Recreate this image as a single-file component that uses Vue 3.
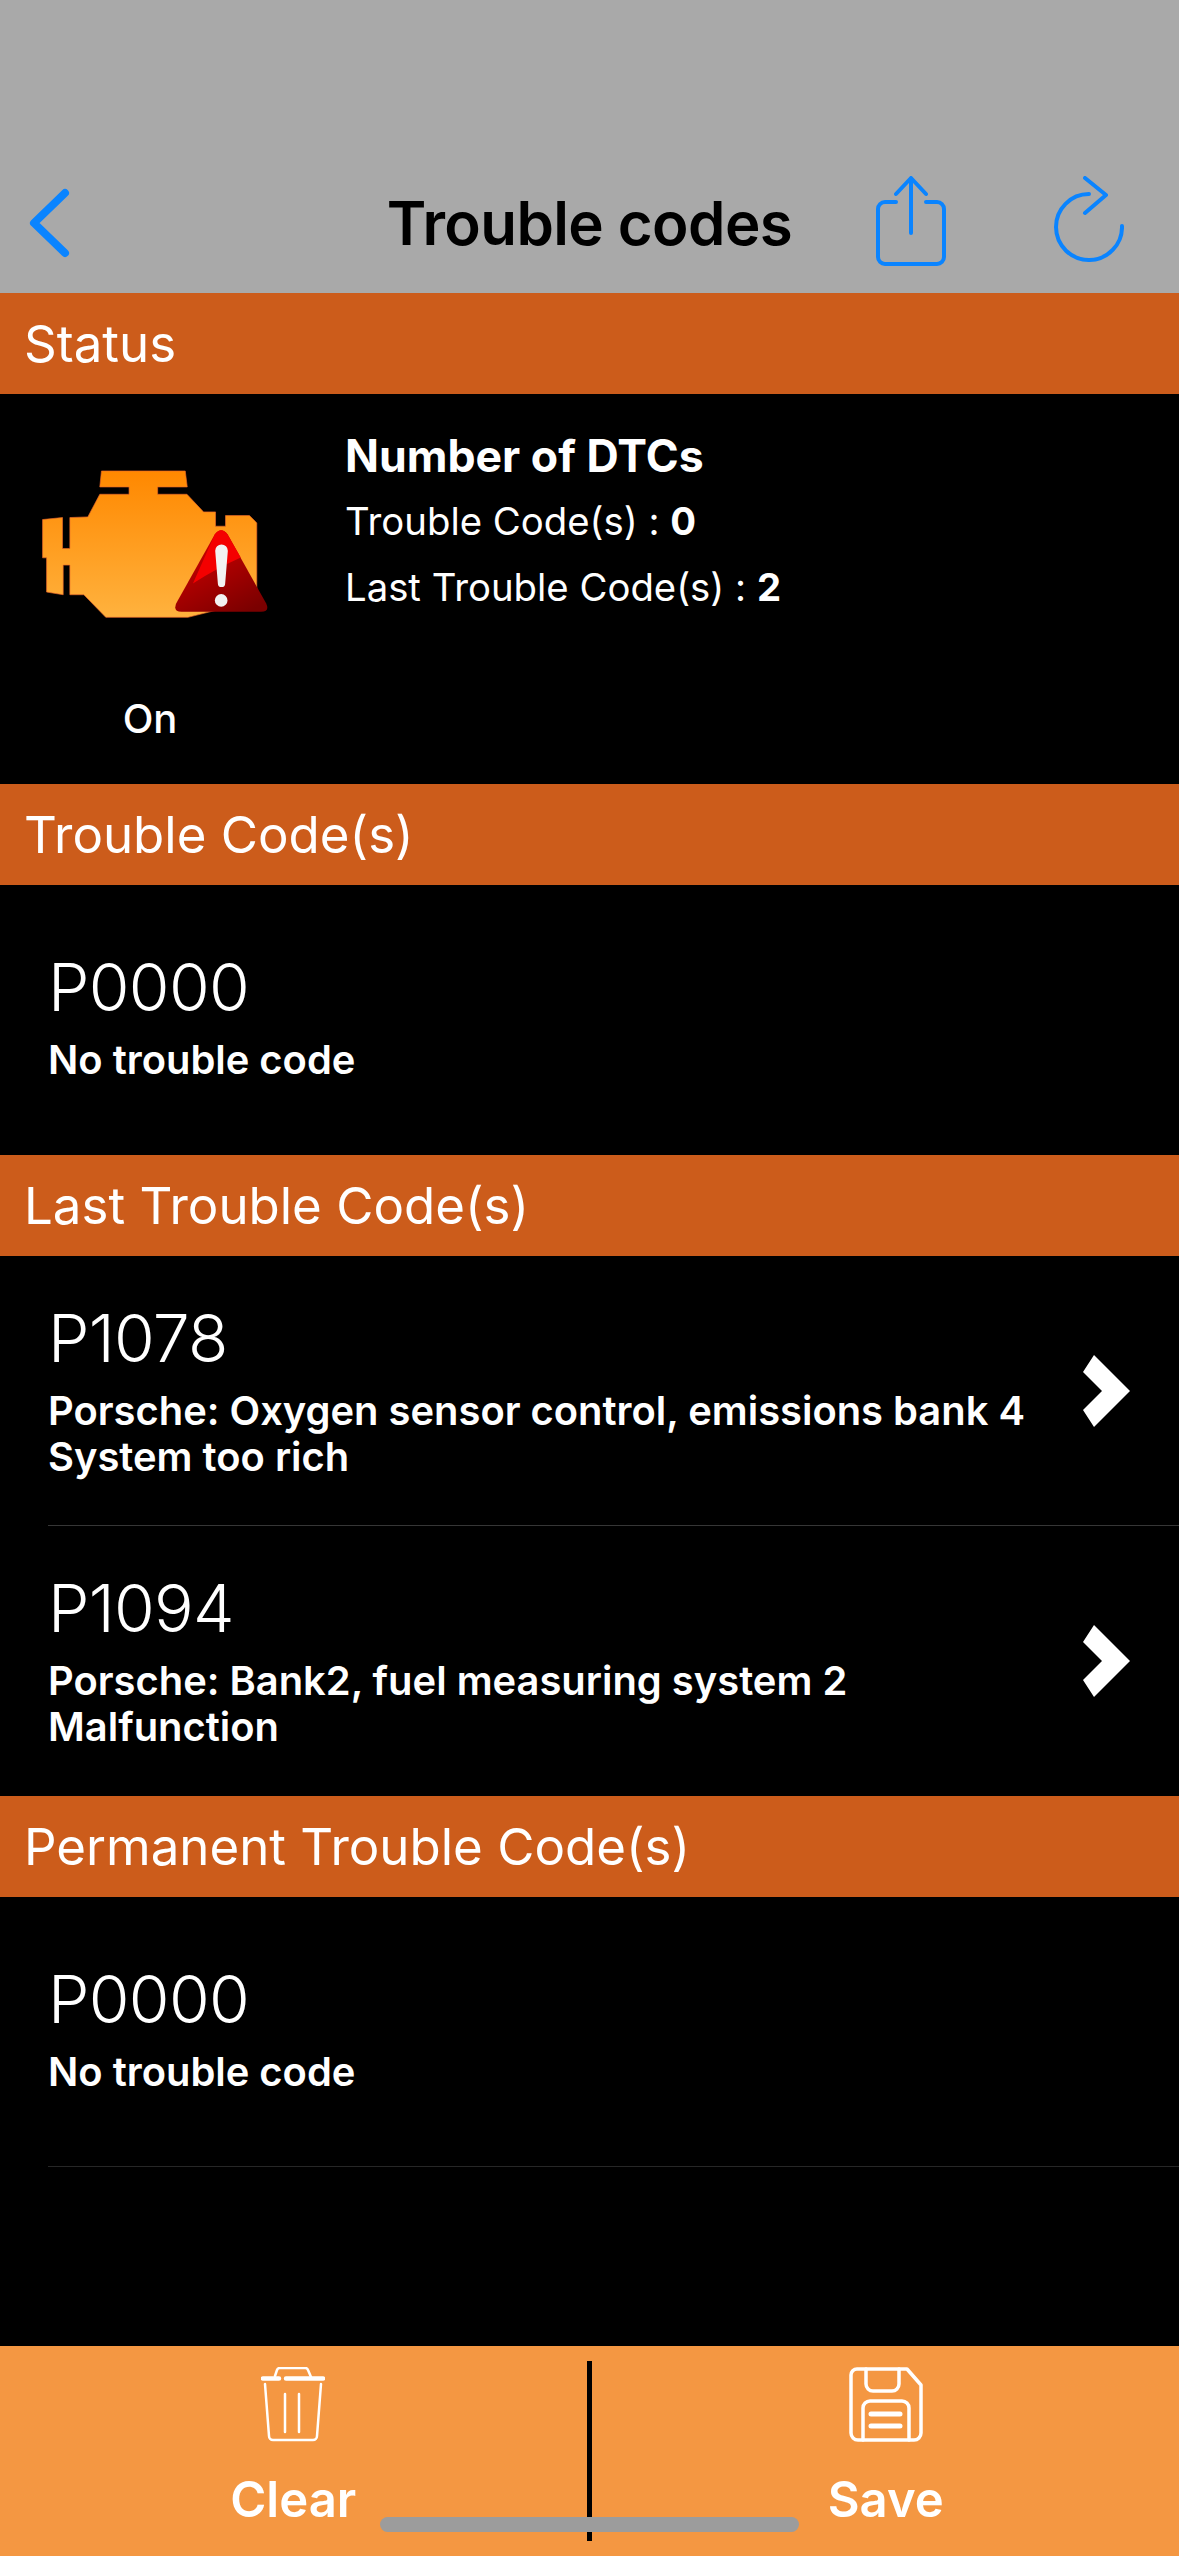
<script setup>
const lastCodes = [
  { code: 'P1078', lines: ['Porsche: Oxygen sensor control, emissions bank 4', 'System too rich'] },
  { code: 'P1094', lines: ['Porsche: Bank2, fuel measuring system 2', 'Malfunction'] }
]
</script>

<template>
  <div class="screen">
    <!-- Nav bar -->
    <header class="nav">
      <svg class="nav-back" viewBox="0 0 42 70" fill="none" stroke="#0A84FF" stroke-width="8" stroke-linecap="round" stroke-linejoin="round">
        <polyline points="37,5 6,35 37,65"></polyline>
      </svg>
      <h1 class="nav-title">Trouble codes</h1>
      <svg class="nav-share" viewBox="0 0 70 90" fill="none" stroke="#0A84FF" stroke-width="4" stroke-linecap="round" stroke-linejoin="round">
        <path d="M20 26H9a7 7 0 0 0-7 7v48a7 7 0 0 0 7 7h52a7 7 0 0 0 7-7V33a7 7 0 0 0-7-7H50"></path>
        <path d="M35 57V3"></path>
        <polyline points="20,18 35,2 50,18"></polyline>
      </svg>
      <svg class="nav-refresh" viewBox="0 0 70 86" fill="none" stroke="#0A84FF" stroke-width="4" stroke-linecap="round" stroke-linejoin="round">
        <path d="M68 50A33 33 0 1 1 35 18"></path>
        <polyline points="31,2 52,19 31,37"></polyline>
      </svg>
    </header>

    <div class="section-bar">Status</div>
    <section class="status">
      <div class="status-light">
        <svg class="engine" viewBox="40 80 720 460">
          <defs>
            <linearGradient id="engineFill" x1="0" y1="0" x2="0" y2="1">
              <stop offset="0" stop-color="#FF8800"></stop>
              <stop offset="1" stop-color="#FFB23E"></stop>
            </linearGradient>
            <linearGradient id="warnFill" x1="0.2" y1="0" x2="0.8" y2="1">
              <stop offset="0" stop-color="#D80000"></stop>
              <stop offset="1" stop-color="#7A0000"></stop>
            </linearGradient>
          </defs>
          <polygon
            fill="url(#engineFill)"
            stroke="#E8662A"
            stroke-width="2"
            points="245,92 497,92 503,140 414,140 414,162 502,162 552,215 588,215 588,258 618,258 618,226 690,226 712,248 712,480 505,532 258,532 192,464 150,464 150,375 130,375 130,464 80,456 80,353 68,353 68,238 128,232 128,325 150,325 150,232 204,230 240,162 328,162 328,140 240,140"
          ></polygon>
          <path fill="url(#warnFill)" d="M586 282Q605 258 624 282L740 490Q752 515 725 515H486Q459 515 470 490Z"></path>
          <path fill="#F40000" d="M586 282Q605 258 624 282L664 352Q590 385 520 430Z"></path>
          <path fill="#F2F2F2" d="M587 332a19 19 0 0 1 38 0L617 430a11 11 0 0 1-22 0Z"></path>
          <circle cx="605" cy="481" r="19" fill="#F2F2F2"></circle>
        </svg>
        <span class="status-on">On</span>
      </div>
      <div class="status-info">
        <div class="status-heading">Number of DTCs</div>
        <div class="status-line">Trouble Code(s) : <b>0</b></div>
        <div class="status-line">Last Trouble Code(s) : <b>2</b></div>
      </div>
    </section>

    <div class="section-bar">Trouble Code(s)</div>
    <div class="code-row">
      <div class="code-text single">
        <div class="code">P0000</div>
        <div class="desc">No trouble code</div>
      </div>
    </div>

    <div class="section-bar">Last Trouble Code(s)</div>
    <div v-for="(item, idx) in lastCodes" :key="item.code" class="code-row" :class="{ 'has-line': idx === 0 }">
      <div class="code-text">
        <div class="code">{{ item.code }}</div>
        <div v-for="line in item.lines" :key="line" class="desc">{{ line }}</div>
      </div>
      <svg class="row-chevron" viewBox="0 0 47 72">
        <polygon fill="#FFFFFF" points="11,0 47,36 11,72 0,55 19,36 0,17"></polygon>
      </svg>
    </div>

    <div class="section-bar">Permanent Trouble Code(s)</div>
    <div class="code-row has-line dim-line">
      <div class="code-text single">
        <div class="code">P0000</div>
        <div class="desc">No trouble code</div>
      </div>
    </div>

    <div class="spacer"></div>

    <!-- Bottom actions -->
    <footer class="actions">
      <div class="action">
        <svg class="action-icon trash" viewBox="0 0 64 75" fill="none" stroke="#FFFFFF" stroke-width="2.5" stroke-linecap="round" stroke-linejoin="round">
          <path d="M14 9l2-6a3 3 0 0 1 3-2h25a3 3 0 0 1 3 2l3 7"></path>
          <path d="M2 11.500H18M25 11.500H62" stroke-width="4.500"></path>
          <path d="M4 17l4 52a4 4 0 0 0 4 4h40a4 4 0 0 0 4-4l4-52"></path>
          <path d="M24 27V65M38 27V65"></path>
        </svg>
        <span class="action-label">Clear</span>
      </div>
      <div class="action">
        <svg class="action-icon floppy" viewBox="0 0 74 75" fill="none" stroke="#FFFFFF" stroke-width="3.500" stroke-linecap="round" stroke-linejoin="round">
          <path d="M8 2H58L72 18V66a7 7 0 0 1-7 7H9a7 7 0 0 1-7-7V8a6 6 0 0 1 6-6Z"></path>
          <path d="M17 2V17a7 7 0 0 0 7 7H43a7 7 0 0 0 7-7V2"></path>
          <path d="M14 73V41a7 7 0 0 1 7-7H53a7 7 0 0 1 7 7V73"></path>
          <path d="M22 47H51M22 59H51" stroke-width="5"></path>
        </svg>
        <span class="action-label">Save</span>
      </div>
      <div class="action-divider"></div>
      <div class="home-bar"></div>
    </footer>
  </div>
</template>

<style scoped>
.screen {
  width: 1179px;
  height: 2556px;
  display: flex;
  flex-direction: column;
  background: #000000;
  color: #FFFFFF;
  font-family: Inter, "Liberation Sans", sans-serif;
  overflow: hidden;
}

/* Nav bar */
.nav {
  height: 293px;
  flex-shrink: 0;
  background: #A9A9A9;
  display: flex;
  align-items: flex-start;
  position: relative;
}

.nav-back {
  width: 42px;
  height: 70px;
  margin: 188px 0 0 28px;
}

.nav-title {
  position: absolute;
  left: 0;
  right: 0;
  top: 188px;
  margin: 0;
  text-align: center;
  color: #000000;
  font-size: 60px;
  line-height: 70px;
  font-weight: 600;
  letter-spacing: -0.6px;
}

.nav-share {
  width: 70px;
  height: 90px;
  margin: 176px 0 0 806px;
}

.nav-refresh {
  width: 70px;
  height: 86px;
  margin: 176px 0 0 108px;
}

/* Section bars */
.section-bar {
  height: 101px;
  flex-shrink: 0;
  background: #CC5C1B;
  padding-left: 24px;
  font-size: 51px;
  line-height: 101px;
  font-weight: 400;
}

/* Status */
.status {
  height: 390px;
  flex-shrink: 0;
  display: flex;
}

.status-light {
  width: 300px;
  display: flex;
  flex-direction: column;
  align-items: center;
}

.engine {
  width: 240px;
  height: 153px;
  margin-top: 73px;
  margin-left: 5px;
  flex-shrink: 0;
}

.status-on {
  margin-top: 77px;
  font-size: 40px;
  line-height: 44px;
  font-weight: 500;
}

.status-info {
  margin-left: 45px;
  padding-top: 36px;
}

.status-heading {
  font-size: 44.6px;
  line-height: 52px;
  font-weight: 700;
  margin-bottom: 6px;
}

.status-line {
  font-size: 38.3px;
  line-height: 66px;
  font-weight: 400;
}

.status-line b {
  font-weight: 700;
}

/* Code rows */
.code-row {
  height: 270px;
  flex-shrink: 0;
  display: flex;
  align-items: center;
  justify-content: space-between;
  padding-left: 48px;
  padding-right: 49px;
  position: relative;
}

.code-row.has-line::after {
  content: "";
  position: absolute;
  left: 48px;
  right: 0;
  bottom: 0;
  height: 1px;
  background: #363636;
}

.code-row.dim-line::after {
  background: #262626;
}

.code-text {
  padding-bottom: 4px;
}

.code-text.single {
  padding-bottom: 10px;
}

.code {
  font-size: 66px;
  line-height: 80px;
  font-weight: 300;
  letter-spacing: -0.7px;
  margin-bottom: 10px;
}

.desc {
  font-size: 39.9px;
  line-height: 46px;
  font-weight: 600;
  white-space: nowrap;
}

.row-chevron {
  width: 47px;
  height: 72px;
  flex-shrink: 0;
}

.spacer {
  flex: 1;
}

/* Bottom actions */
.actions {
  height: 210px;
  flex-shrink: 0;
  background: #F49742;
  display: flex;
  position: relative;
}

.action {
  flex: 1;
  display: flex;
  flex-direction: column;
  align-items: center;
  padding-top: 21px;
}

.action:first-child {
  padding-right: 6px;
}

.action-icon {
  height: 75px;
  flex-shrink: 0;
}

.trash {
  width: 64px;
}

.floppy {
  width: 74px;
}

.action-label {
  margin-top: 28px;
  font-size: 49px;
  line-height: 60px;
  font-weight: 600;
}

.action-divider {
  position: absolute;
  left: 587px;
  top: 15px;
  width: 5px;
  height: 180px;
  background: #000000;
}

.home-bar {
  position: absolute;
  left: 380px;
  top: 171px;
  width: 419px;
  height: 15px;
  border-radius: 8px;
  background: #9C9C9C;
}
</style>
